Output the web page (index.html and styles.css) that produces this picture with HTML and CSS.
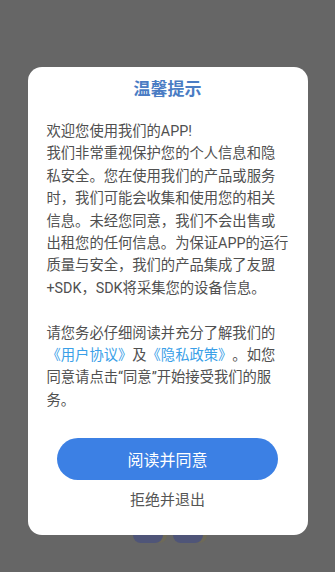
FILE: index.html
```html
<!DOCTYPE html>
<html lang="zh-CN">
  <head>
    <meta charset="UTF-8" />
    <meta name="viewport" content="width=device-width, initial-scale=1.0" />
    <title>温馨提示</title>
    <link rel="stylesheet" href="styles.css">
  </head>
  <body>
    <div class="dialog">
      <div class="title">温馨提示</div>
      <div class="content">
        <p>欢迎您使用我们的APP!<br />我们非常重视保护您的个人信息和隐私安全。您在使用我们的产品或服务时，我们可能会收集和使用您的相关信息。未经您同意，我们不会出售或出租您的任何信息。为保证APP的运行质量与安全，我们的产品集成了友盟+SDK，SDK将采集您的设备信息。</p>
        <p>请您务必仔细阅读并充分了解我们的<a href="#">《用户协议》</a>及<a href="#">《隐私政策》</a>。如您同意请点击“同意”开始接受我们的服务。</p>
      </div>
      <button class="agree">阅读并同意</button>
      <div class="refuse">拒绝并退出</div>
    </div>
    <div class="legs">
      <span></span>
      <span></span>
    </div>
  </body>
</html>
```

FILE: styles.css
```css
body {
  margin: 0;
  padding: 0;
  background-color: #666666;
  font-family: Roboto, "Noto Sans CJK SC", sans-serif;
  height: 100vh;
  overflow: hidden;
}
.dialog {
  position: relative;
  z-index: 1;
  width: 280px;
  margin: 67px auto 0;
  padding: 10px 0 23px;
  background-color: white;
  border-radius: 14px;
  box-sizing: border-box;
}
.title {
  text-align: center;
  color: #4a7cc4;
  font-size: 17px;
  font-weight: bold;
  line-height: 24px;
}
.content {
  width: 242.5px;
  margin: 19px 0 0 19px;
  color: #505050;
  font-size: 14.3px;
  line-height: 22.4px;
  text-spacing-trim: space-all;
}
.content p {
  margin: 0 0 22.4px;
}
.content p:last-child {
  margin-bottom: 0;
}
.content a {
  color: #3a9fe8;
  text-decoration: none;
}
.agree {
  display: block;
  width: 221px;
  height: 42px;
  margin: 27px auto 0;
  border: none;
  border-radius: 21px;
  background-color: #3c80e4;
  color: white;
  font-family: inherit;
  font-size: 16px;
}
.refuse {
  margin-top: 8px;
  text-align: center;
  color: #555;
  font-size: 15px;
  line-height: 24px;
}
.legs {
  display: flex;
  justify-content: center;
  gap: 10px;
  margin-top: -4px;
}
.legs span {
  width: 30px;
  height: 12px;
  border-radius: 0 0 8px 8px;
  background-color: #4f5578;
  box-shadow: 4px 0 0 #6e6a58;
}
```
